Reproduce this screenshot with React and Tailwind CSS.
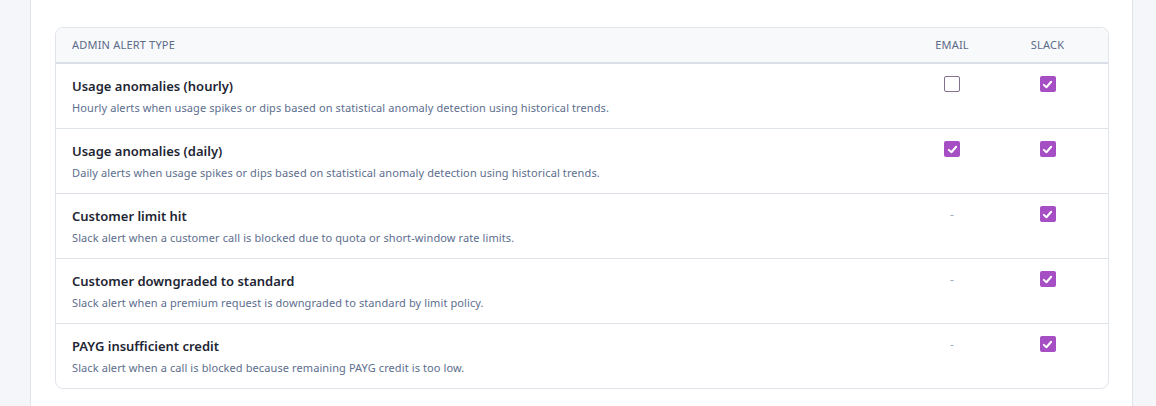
import React from "react";

const rows = [
  { title: "Usage anomalies (hourly)", desc: "Hourly alerts when usage spikes or dips based on statistical anomaly detection using historical trends.", email: false, slack: true },
  { title: "Usage anomalies (daily)", desc: "Daily alerts when usage spikes or dips based on statistical anomaly detection using historical trends.", email: true, slack: true },
  { title: "Customer limit hit", desc: "Slack alert when a customer call is blocked due to quota or short-window rate limits.", email: null, slack: true },
  { title: "Customer downgraded to standard", desc: "Slack alert when a premium request is downgraded to standard by limit policy.", email: null, slack: true },
  { title: "PAYG insufficient credit", desc: "Slack alert when a call is blocked because remaining PAYG credit is too low.", email: null, slack: true },
];

function Box({ checked }) {
  if (checked) {
    return (
      <span className="flex h-[16px] w-[16px] items-center justify-center rounded-[2px] bg-[#a64ec3]">
        <svg width="11" height="11" viewBox="0 0 12 12" fill="none">
          <path d="M2 6.4 L4.8 9 L10 3" stroke="white" strokeWidth="2.2" strokeLinecap="round" strokeLinejoin="round" />
        </svg>
      </span>
    );
  }
  return <span className="block h-[16px] w-[16px] rounded-[2px] border border-[#80708a] bg-white" />;
}

function Cell({ value }) {
  return (
    <div className="flex justify-center pt-[12px]">
      {value === null ? (
        <span className="mt-[2px] text-[12px] leading-[14px] text-[#a0a8b8]">-</span>
      ) : (
        <Box checked={value} />
      )}
    </div>
  );
}

export default function App() {
  return (
    <div className="flex h-[406px] w-[1156px] overflow-hidden bg-[#f5f6fa]" style={{ fontFamily: '"Noto Sans", "Open Sans", sans-serif' }}>
      <div className="w-[30px] shrink-0" />
      <div className="w-[1103px] shrink-0 border-x border-[#dfe3ea] bg-white pl-[24px] pr-[23px] pt-[27px]">
        <div className="overflow-hidden rounded-lg border border-[#e0e4eb]">
          <div className="grid grid-cols-[1fr_96px_95px] border-b-2 border-[#dadfe7] bg-[#f8f9fb] pr-[13px]">
            <div className="py-[10px] pl-[16px] text-[11px] leading-[14px] tracking-[0.2px] text-[#5a6a88]">ADMIN ALERT TYPE</div>
            <div className="py-[10px] text-center text-[11px] leading-[14px] tracking-[0.2px] text-[#5a6a88]">EMAIL</div>
            <div className="py-[10px] text-center text-[11px] leading-[14px] tracking-[0.2px] text-[#5a6a88]">SLACK</div>
          </div>
          {rows.map((r, i) => (
            <div key={i} className={`grid grid-cols-[1fr_96px_95px] pr-[13px] ${i < rows.length - 1 ? "border-b border-[#dfe3ea]" : ""}`}>
              <div className="pb-[12px] pl-[16px] pt-[12px]">
                <div className="text-[13px] font-semibold leading-[20px] text-[#1e2533]">{r.title}</div>
                <div className="mt-[4px] text-[11px] leading-[16px] tracking-[0.1px] text-[#5d6e8e]">{r.desc}</div>
              </div>
              <Cell value={r.email} />
              <Cell value={r.slack} />
            </div>
          ))}
        </div>
      </div>
    </div>
  );
}
